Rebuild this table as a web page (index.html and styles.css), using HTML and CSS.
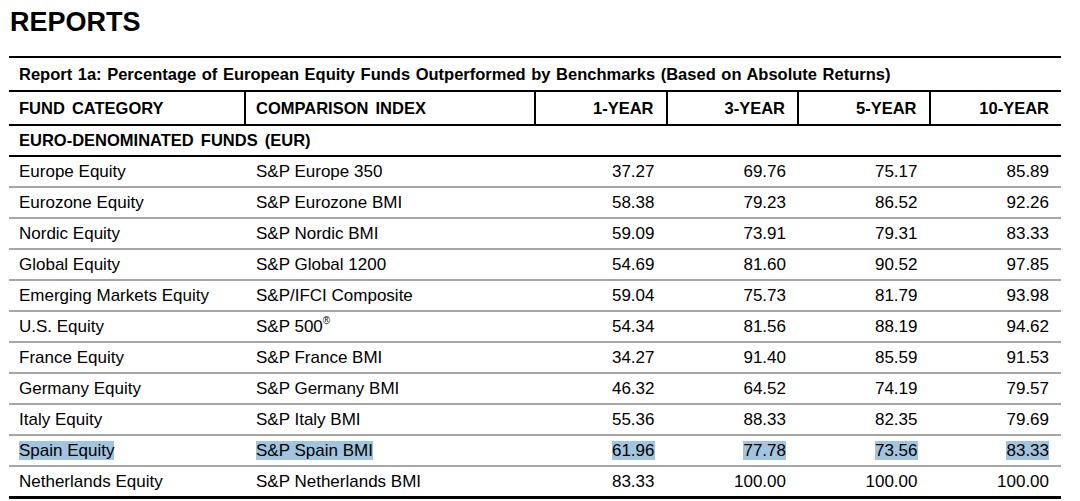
FILE: index.html
```html
<!DOCTYPE html>
<html>
<head>
<meta charset="utf-8">
<link rel="stylesheet" href="styles.css">
</head>
<body>
<div class="page">
  <h1 class="title">REPORTS</h1>
  <table class="report">
    <colgroup>
      <col class="c-cat"><col class="c-idx"><col class="c-num"><col class="c-num"><col class="c-num"><col class="c-num">
    </colgroup>
    <thead>
      <tr class="caption-row"><th colspan="6">Report 1a: Percentage of European Equity Funds Outperformed by Benchmarks (Based on Absolute Returns)</th></tr>
      <tr class="head-row">
        <th class="txt">FUND CATEGORY</th>
        <th class="txt">COMPARISON INDEX</th>
        <th class="num">1-YEAR</th>
        <th class="num">3-YEAR</th>
        <th class="num">5-YEAR</th>
        <th class="num">10-YEAR</th>
      </tr>
      <tr class="group-row"><th colspan="6">EURO-DENOMINATED FUNDS (EUR)</th></tr>
    </thead>
    <tbody>
      <tr><td>Europe Equity</td><td>S&amp;P Europe 350</td><td class="num">37.27</td><td class="num">69.76</td><td class="num">75.17</td><td class="num">85.89</td></tr>
      <tr><td>Eurozone Equity</td><td>S&amp;P Eurozone BMI</td><td class="num">58.38</td><td class="num">79.23</td><td class="num">86.52</td><td class="num">92.26</td></tr>
      <tr><td>Nordic Equity</td><td>S&amp;P Nordic BMI</td><td class="num">59.09</td><td class="num">73.91</td><td class="num">79.31</td><td class="num">83.33</td></tr>
      <tr><td>Global Equity</td><td>S&amp;P Global 1200</td><td class="num">54.69</td><td class="num">81.60</td><td class="num">90.52</td><td class="num">97.85</td></tr>
      <tr><td>Emerging Markets Equity</td><td>S&amp;P/IFCI Composite</td><td class="num">59.04</td><td class="num">75.73</td><td class="num">81.79</td><td class="num">93.98</td></tr>
      <tr><td>U.S. Equity</td><td>S&amp;P 500<sup class="reg">®</sup></td><td class="num">54.34</td><td class="num">81.56</td><td class="num">88.19</td><td class="num">94.62</td></tr>
      <tr><td>France Equity</td><td>S&amp;P France BMI</td><td class="num">34.27</td><td class="num">91.40</td><td class="num">85.59</td><td class="num">91.53</td></tr>
      <tr><td>Germany Equity</td><td>S&amp;P Germany BMI</td><td class="num">46.32</td><td class="num">64.52</td><td class="num">74.19</td><td class="num">79.57</td></tr>
      <tr><td>Italy Equity</td><td>S&amp;P Italy BMI</td><td class="num">55.36</td><td class="num">88.33</td><td class="num">82.35</td><td class="num">79.69</td></tr>
      <tr class="selected"><td><span class="hl">Spain Equity</span></td><td><span class="hl">S&amp;P Spain BMI</span></td><td class="num"><span class="hl">61.96</span></td><td class="num"><span class="hl">77.78</span></td><td class="num"><span class="hl">73.56</span></td><td class="num"><span class="hl">83.33</span></td></tr>
      <tr class="last"><td>Netherlands Equity</td><td>S&amp;P Netherlands BMI</td><td class="num">83.33</td><td class="num">100.00</td><td class="num">100.00</td><td class="num">100.00</td></tr>
    </tbody>
  </table>
</div>
</body>
</html>
```

FILE: styles.css
```css
html, body {
  margin: 0;
  padding: 0;
  background: #ffffff;
}

.page {
  padding: 9px 19px 0 9px;
  font-family: "Liberation Sans", Arial, sans-serif;
  color: #000;
}

.title {
  margin: 0 0 20px 1px;
  font-size: 27px;
  line-height: 27px;
  font-weight: bold;
}

.report {
  width: 1052px;
  border-collapse: collapse;
  table-layout: fixed;
  font-size: 17px;
}

.c-cat { width: 236px; }
.c-idx { width: 290px; }
.c-num { width: 131.5px; }

.report th,
.report td {
  padding: 0 0 0 10px;
  text-align: left;
  white-space: nowrap;
}

.report th {
  font-weight: bold;
  font-size: 16.5px;
  word-spacing: 2.5px;
}

.caption-row th {
  border-top: 2px solid #000;
  border-bottom: 2px solid #000;
  height: 32px;
  font-size: 16.5px;
  word-spacing: 1px;
}

.head-row th {
  height: 32px;
  border: 2px solid #000;
  border-top: 0;
}

.head-row th:first-child { border-left: 0; }
.head-row th:last-child { border-right: 0; }

.report .num {
  text-align: right;
  padding: 0 12px 0 0;
}

.group-row th {
  height: 29px;
  border-bottom: 2px solid #000;
}

.report td {
  height: 29px;
  border-bottom: 2px solid #a6a6a6;
}

.report td:nth-child(2) { padding-left: 11px; }

.report tr.last td {
  border-bottom: 3px solid #000;
}

.hl {
  background: #a2c4de;
}

.reg {
  font-size: 10px;
  vertical-align: 8px;
  line-height: 0;
}
```
